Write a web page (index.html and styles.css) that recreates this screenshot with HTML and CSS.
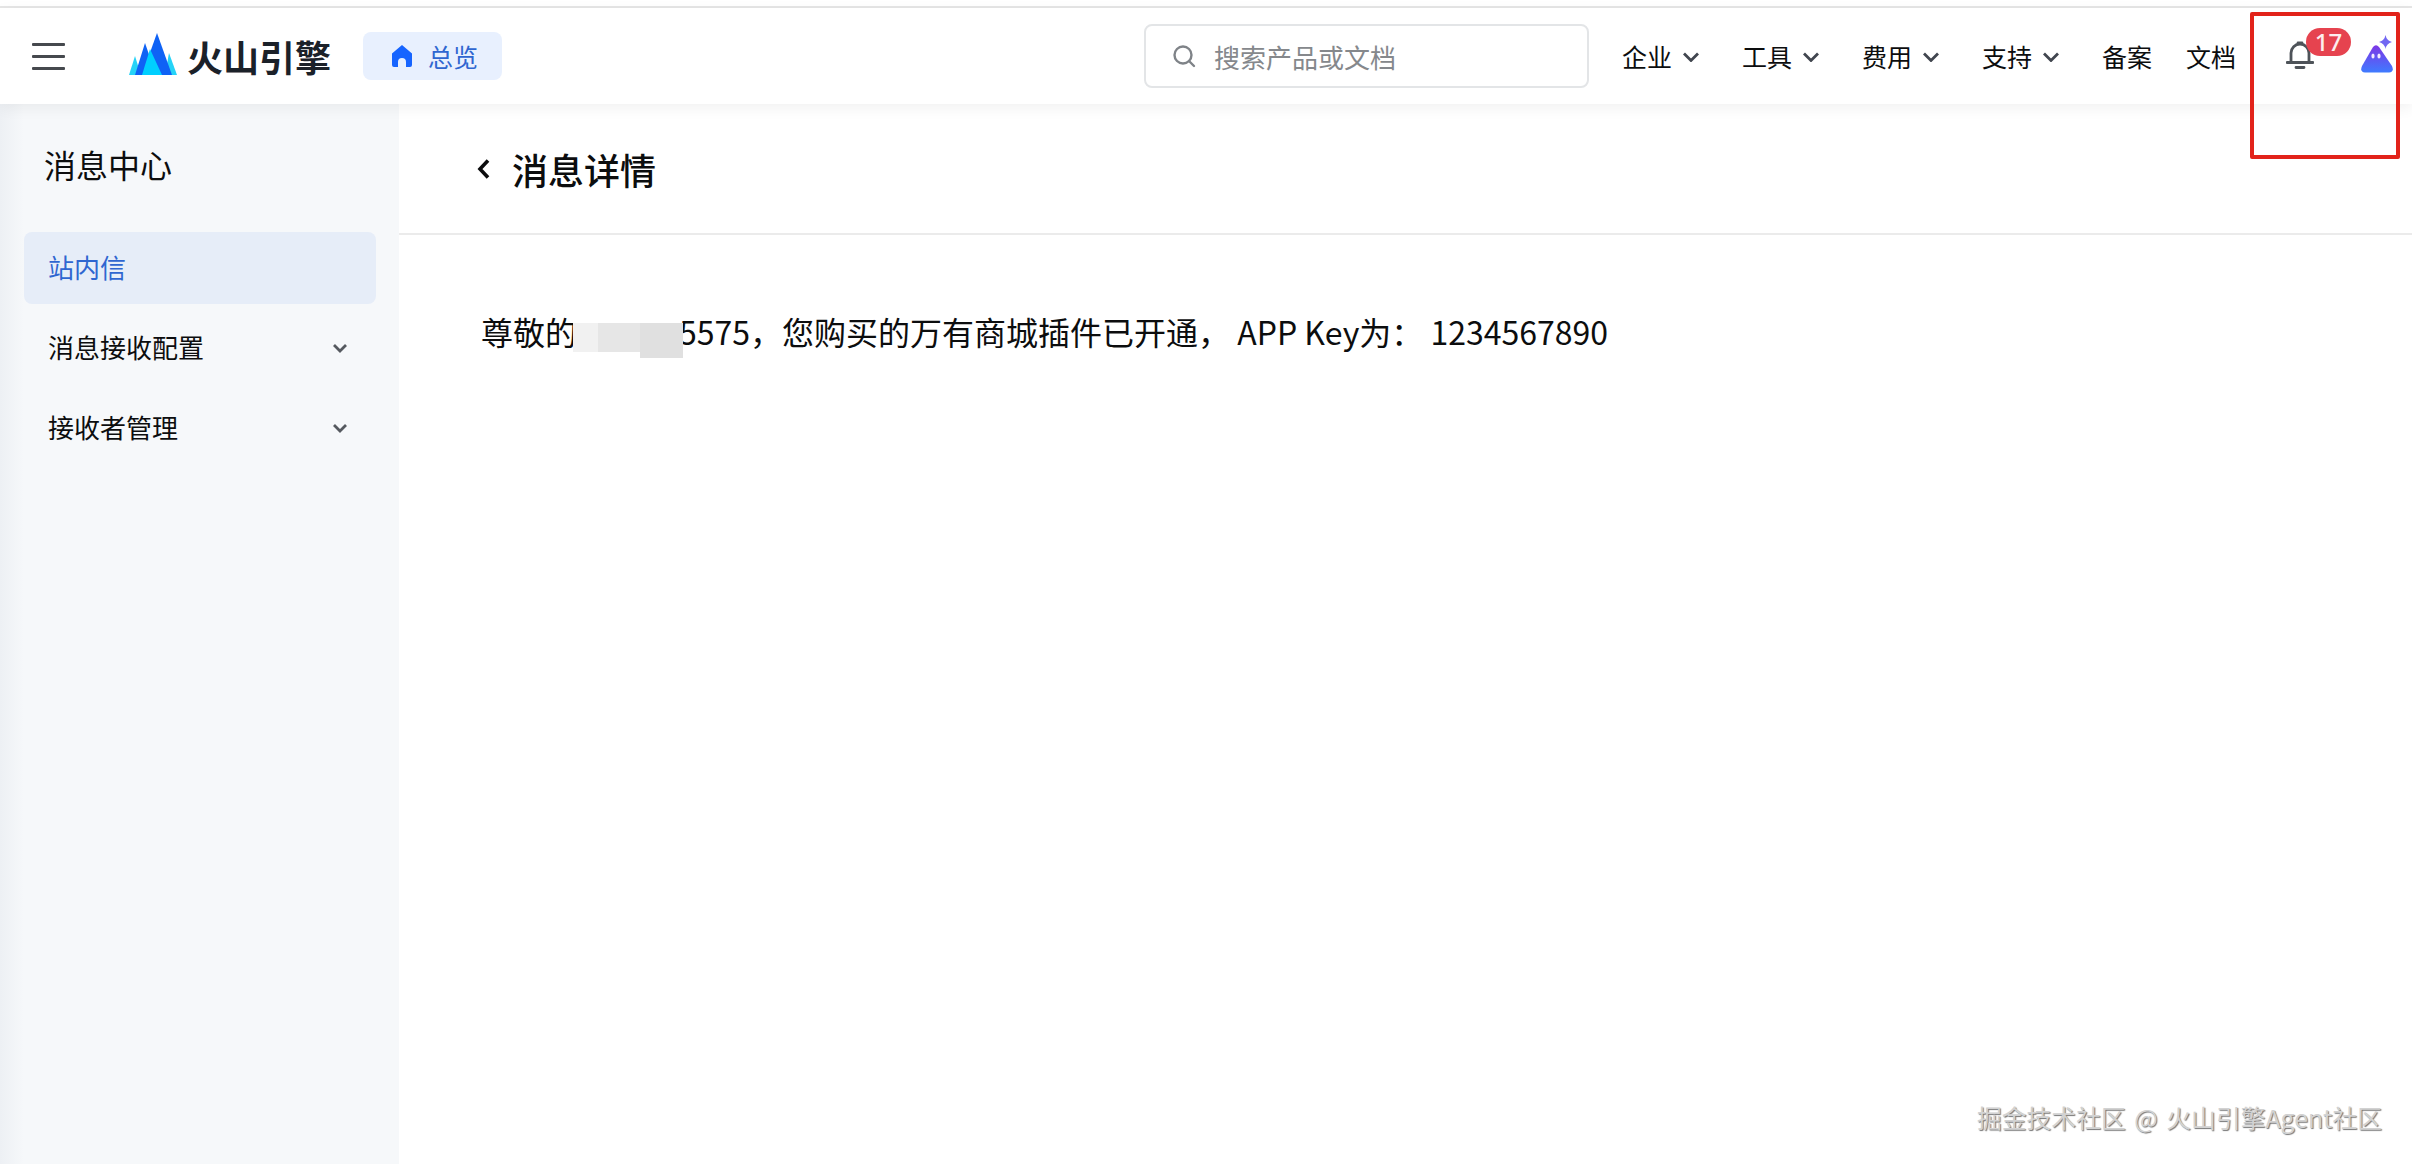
FILE: index.html
```html
<!DOCTYPE html>
<html lang="zh-CN">
<head>
<meta charset="utf-8">
<title>消息详情</title>
<link rel="stylesheet" href="styles.css">
</head>
<body>
<div class="page">
  <div class="top-strip"></div>
  <header class="header">
    <button class="menu-btn" aria-label="menu"><span></span><span></span><span></span></button>
    <a class="logo">
      <svg class="logo-mark" viewBox="0 0 48 43" width="48" height="43">
        <polygon points="6,23 12,42 0,42" fill="#26d3f7"/>
        <polygon points="40,20 48,42 36,42" fill="#26d3f7"/>
        <polygon points="16,10 27,42 6,42" fill="#0f62f5"/>
        <polygon points="28,0 43,42 13,42" fill="#0f62f5"/>
        <polygon points="21,16 33,42 13,42" fill="#00cfff"/>
      </svg>
      <span class="logo-text">火山引擎</span>
    </a>
    <a class="home-chip">
      <svg viewBox="0 0 22 24" width="22" height="24"><path d="M11 1 21 9.500V21a2 2 0 0 1-2 2h-4v-5a4 4 0 0 0-8 0v5H3a2 2 0 0 1-2-2V9.500Z" fill="#1664ff"/></svg>
      <span>总览</span>
    </a>
    <div class="search">
      <svg viewBox="0 0 24 24" width="24" height="24"><circle cx="11" cy="11" r="8.500" fill="none" stroke="#7f8388" stroke-width="2.400"/><path d="m17 17 5 5" stroke="#7f8388" stroke-width="2.400" stroke-linecap="round"/></svg>
      <span>搜索产品或文档</span>
    </div>
    <nav class="nav">
      <a class="nav-item">企业<svg class="nav-chev" viewBox="0 0 16 10" width="16" height="10"><path d="m1 1.500 7 7 7-7" fill="none" stroke="#41464f" stroke-width="2.800"/></svg></a>
      <a class="nav-item">工具<svg class="nav-chev" viewBox="0 0 16 10" width="16" height="10"><path d="m1 1.500 7 7 7-7" fill="none" stroke="#41464f" stroke-width="2.800"/></svg></a>
      <a class="nav-item">费用<svg class="nav-chev" viewBox="0 0 16 10" width="16" height="10"><path d="m1 1.500 7 7 7-7" fill="none" stroke="#41464f" stroke-width="2.800"/></svg></a>
      <a class="nav-item">支持<svg class="nav-chev" viewBox="0 0 16 10" width="16" height="10"><path d="m1 1.500 7 7 7-7" fill="none" stroke="#41464f" stroke-width="2.800"/></svg></a>
      <a class="nav-item">备案</a>
      <a class="nav-item">文档</a>
    </nav>
    <div class="bell">
      <svg viewBox="0 0 28 28" width="28" height="28"><path d="M12 2h4M5 21.500V12a9 9 0 0 1 18 0v9.500M1 21.500h26M10 26.500h8" fill="none" stroke="#4e5359" stroke-width="2.800" stroke-linecap="round"/></svg>
      <span class="badge">17</span>
    </div>
    <svg class="avatar" viewBox="0 0 34 39" width="34" height="39">
      <defs><linearGradient id="av" x1="0" y1="0" x2="0" y2="1"><stop offset="0" stop-color="#7d36e6"/><stop offset="1" stop-color="#3f7bff"/></linearGradient></defs>
      <path d="M13 13q3-3.500 6 0L32 32q2.500 6-3 6.500H5q-5.500-.5-3-6.500Z" fill="url(#av)"/>
      <ellipse cx="13" cy="22" rx="1.600" ry="2.600" fill="#f3eaff"/>
      <ellipse cx="19" cy="22" rx="1.600" ry="2.600" fill="#f3eaff"/>
      <path d="M25.500 1q1 5.500 6.500 7-5.500 1.500-6.500 7-1-5.500-6.500-7 5.500-1.500 6.500-7Z" fill="#7267f2"/>
    </svg>
  </header>
  <div class="body">
    <aside class="sidebar">
      <h2 class="side-title">消息中心</h2>
      <ul class="side-menu">
        <li class="side-item active">站内信</li>
        <li class="side-item">消息接收配置<svg viewBox="0 0 14 9" width="14" height="9"><path d="m1 1 6 6 6-6" fill="none" stroke="#55595f" stroke-width="2.800"/></svg></li>
        <li class="side-item">接收者管理<svg viewBox="0 0 14 9" width="14" height="9"><path d="m1 1 6 6 6-6" fill="none" stroke="#55595f" stroke-width="2.800"/></svg></li>
      </ul>
    </aside>
    <main class="main">
      <div class="detail-head">
        <svg viewBox="0 0 14 22" width="14" height="22"><path d="M12 2.500 4 11l8 8.500" fill="none" stroke="#0c0d0e" stroke-width="3.600"/></svg>
        <h1>消息详情</h1>
      </div>
      <p class="message">尊敬的<span class="redact"><i class="r1"></i><i class="r2"></i><i class="r3"></i></span>5575，您购买的万有商城插件已开通， APP Key为： 1234567890</p>
    </main>
  </div>
  <div class="highlight"></div>
  <div class="watermark">掘金技术社区 @ 火山引擎Agent社区</div>
</div>
</body>
</html>
```

FILE: styles.css
```css
* { box-sizing: border-box; }
html, body { margin: 0; height: 100%; background: #fff; }
body { font-family: "Noto Sans CJK SC", "Noto Sans", sans-serif; color: #0c0d0e; overflow: hidden; }
.page { position: relative; width: 2412px; height: 1164px; display: flex; flex-direction: column; }

.top-strip { height: 8px; background: #fff; border-bottom: 2px solid #e6e6e6; flex: none; margin-bottom: 0; }

.header { flex: none; height: 96px; display: flex; align-items: center; padding: 0 18px 0 32px; background: #fff; position: relative; z-index: 2; box-shadow: 0 4px 14px rgba(0, 0, 0, .06); }

.menu-btn { width: 33px; height: 27px; padding: 0; border: 0; background: none; display: flex; flex-direction: column; justify-content: space-between; }
.menu-btn span { display: block; height: 3px; background: #46494e; border-radius: 1px; }

.logo { display: flex; align-items: center; margin-left: 64px; }
.logo-mark { flex: none; margin-top: -4px; }
.logo-text { margin-left: 10px; font-size: 36px; line-height: 44px; font-weight: 700; color: #1b2129; letter-spacing: 0; white-space: nowrap; }

.home-chip { margin-left: 32px; width: 139px; height: 48px; background: #e8f0fe; border-radius: 8px; display: flex; align-items: center; padding-left: 28px; gap: 15px; font-size: 25px; color: #2f66d0; }

.search { margin-left: auto; width: 445px; height: 64px; border: 2px solid #e3e5e7; border-radius: 8px; display: flex; align-items: center; padding-left: 26px; gap: 18px; font-size: 26px; color: #85888c; }

.nav { display: flex; margin-left: 33px; gap: 34px; }
.nav-item { display: flex; align-items: center; font-size: 25px; line-height: 36px; color: #0c0d0e; white-space: nowrap; }
.nav-chev { margin-left: 11px; margin-right: 9px; margin-top: 1px; }

.bell { position: relative; margin-left: 50px; width: 28px; height: 28px; margin-top: -2px; }
.bell svg { display: block; }
.badge { position: absolute; left: 20px; top: -13px; width: 45px; height: 28px; border-radius: 14px; background: #e6434f; color: #fdeeee; font-size: 24px; line-height: 28px; text-align: center; font-weight: 500; font-family: "Noto Sans", sans-serif; }

.avatar { margin-left: 46px; margin-top: -5px; flex: none; }

.body { flex: 1; display: flex; min-height: 0; }

.sidebar { width: 399px; flex: none; background: linear-gradient(90deg, #edf0f4 0, #f6f8fa 24px); padding: 0 23px 0 24px; }
.side-title { margin: 0; padding: 36px 0 0 20px; height: 128px; font-size: 32px; line-height: 48px; font-weight: 400; color: #0c0d0e; }
.side-menu { list-style: none; margin: 0; padding: 0; display: flex; flex-direction: column; gap: 8px; }
.side-item { height: 72px; border-radius: 8px; padding: 0 29px 3px 24px; display: flex; align-items: center; justify-content: space-between; font-size: 26px; color: #0c0d0e; }
.side-item svg { margin-top: 3px; }
.side-item.active { background: #e6edf8; color: #2f66d0; }

.main { flex: 1; min-width: 0; }
.detail-head { height: 131px; border-bottom: 2px solid #ebebeb; display: flex; align-items: center; padding-left: 77px; gap: 22px; }
.detail-head h1 { margin: 0; font-size: 36px; line-height: 50px; font-weight: 500; color: #0c0d0e; }
.message { margin: 68px 0 0 82px; font-size: 32px; line-height: 56px; color: #0c0d0e; white-space: nowrap; }
.redact { position: relative; display: inline-flex; width: 110px; height: 35px; margin: 0 -4px 0 -4px; vertical-align: -7px; align-items: flex-start; }
.redact i { display: block; }
.r1 { width: 25px; height: 29px; background: #f1f1f1; }
.r2 { width: 42px; height: 29px; background: #e6e6e6; }
.r3 { width: 43px; height: 35px; background: #e0e0e0; }

.highlight { position: absolute; left: 2250px; top: 12px; width: 150px; height: 147px; border: 4px solid #e2231a; border-radius: 2px; z-index: 3; }
.watermark { position: absolute; right: 30px; top: 1099px; font-size: 24.800px; word-spacing: 3px; line-height: 36px; color: #d2d2d2; text-shadow: 1px 1px 1px #757575; white-space: nowrap; z-index: 3; }
```
